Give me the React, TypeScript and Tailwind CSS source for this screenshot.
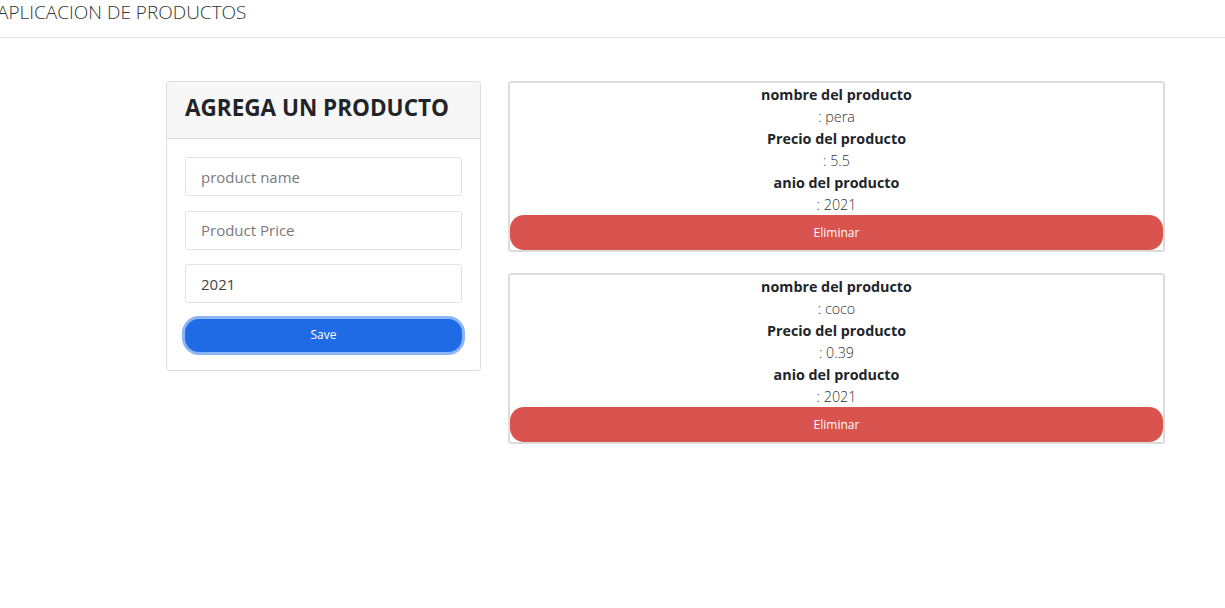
import React from "react";

const products = [
  { name: "pera", price: "5.5", year: "2021" },
  { name: "coco", price: "0.39", year: "2021" },
];

export default function App() {
  return (
    <div className="min-h-[608px] bg-white text-[#212529]" style={{ fontFamily: '"Open Sans", "Noto Sans", sans-serif' }}>
      <header className="h-[38px] border-b border-[#e5e5e5] flex items-center">
        <span className="text-[19px] leading-none -ml-[3px] text-[#333] font-light -mt-[12px]">APLICACION DE PRODUCTOS</span>
      </header>
      <main className="flex items-start gap-[27px] pl-[166px] pt-[43px]">
        <section className="w-[315px] border border-[#dedede] rounded-[3px] overflow-hidden">
          <div className="h-[57px] bg-[#f7f7f7] border-b border-[#dedede] flex items-center px-[18px] pb-[5px]">
            <h2 className="text-[22.5px] font-bold text-[#212529]">AGREGA UN PRODUCTO</h2>
          </div>
          <div className="px-[18px] pt-[18px] pb-[18px] flex flex-col gap-[14.5px]">
            <input className="h-[39px] border border-[#e3e3e3] rounded-[3px] px-[15px] text-[15px] placeholder:text-[#7a7a7a] outline-none" placeholder="product name" />
            <input className="h-[39px] border border-[#e3e3e3] rounded-[3px] px-[15px] text-[15px] placeholder:text-[#7a7a7a] outline-none" placeholder="Product Price" />
            <input className="h-[39px] border border-[#e3e3e3] rounded-[3px] px-[15px] text-[15px] text-[#444] outline-none" defaultValue="2021" />
            <button className="h-[33px] mt-[1px] rounded-[14px] bg-[#1f6be6] text-white text-[12px] ring-[3px] ring-[#8db4f4]">Save</button>
          </div>
        </section>
        <div className="w-[657px] flex flex-col gap-[21px]">
          {products.map((p) => (
            <div key={p.name} className="border-2 border-[#dcdcdc] rounded-[3px] flex flex-col items-center">
              <div className="w-full text-center text-[14.3px] leading-[22px] pt-[1px]">
                <div className="font-bold text-[#212529]">nombre del producto</div>
                <div className="text-[#333] font-light">: {p.name}</div>
                <div className="font-bold text-[#212529]">Precio del producto</div>
                <div className="text-[#333] font-light">: {p.price}</div>
                <div className="font-bold text-[#212529]">anio del producto</div>
                <div className="text-[#333] font-light">: {p.year}</div>
              </div>
              <button className="w-full h-[35px] -mt-[1px] rounded-[14px] bg-[#d9534f] text-white text-[12px]">Eliminar</button>
            </div>
          ))}
        </div>
      </main>
    </div>
  );
}
